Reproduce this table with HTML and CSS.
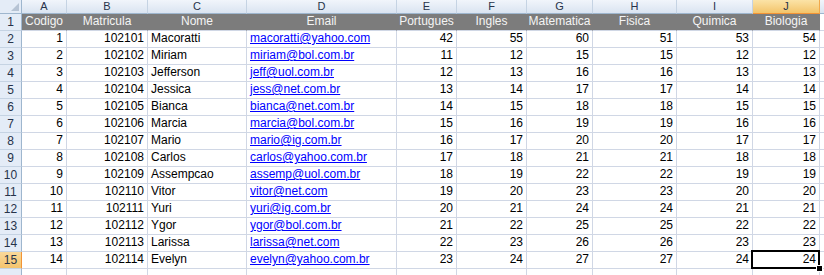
FILE: index.html
```html
<!DOCTYPE html>
<html>
<head>
<meta charset="utf-8">
<link rel="stylesheet" href="styles.css">
</head>
<body>
<div class="sheet">
<div class="ch corner"><span class="tri"></span></div>
<div class="ch">A</div><div class="ch">B</div><div class="ch">C</div><div class="ch">D</div><div class="ch">E</div><div class="ch">F</div><div class="ch">G</div><div class="ch">H</div><div class="ch">I</div><div class="ch sel">J</div><div class="ch"></div>

<div class="rh">1</div>
<div class="c t">Codigo</div><div class="c t">Matricula</div><div class="c t">Nome</div><div class="c t">Email</div><div class="c t">Portugues</div><div class="c t">Ingles</div><div class="c t">Matematica</div><div class="c t">Fisica</div><div class="c t">Quimica</div><div class="c t">Biologia</div><div class="c"></div>

<div class="rh">2</div><div class="c n">1</div><div class="c n">102101</div><div class="c">Macoratti</div><div class="c"><a href="#">macoratti@yahoo.com</a></div><div class="c n">42</div><div class="c n">55</div><div class="c n">60</div><div class="c n">51</div><div class="c n">53</div><div class="c n">54</div><div class="c"></div>
<div class="rh">3</div><div class="c n">2</div><div class="c n">102102</div><div class="c">Miriam</div><div class="c"><a href="#">miriam@bol.com.br</a></div><div class="c n">11</div><div class="c n">12</div><div class="c n">15</div><div class="c n">15</div><div class="c n">12</div><div class="c n">12</div><div class="c"></div>
<div class="rh">4</div><div class="c n">3</div><div class="c n">102103</div><div class="c">Jefferson</div><div class="c"><a href="#">jeff@uol.com.br</a></div><div class="c n">12</div><div class="c n">13</div><div class="c n">16</div><div class="c n">16</div><div class="c n">13</div><div class="c n">13</div><div class="c"></div>
<div class="rh">5</div><div class="c n">4</div><div class="c n">102104</div><div class="c">Jessica</div><div class="c"><a href="#">jess@net.com.br</a></div><div class="c n">13</div><div class="c n">14</div><div class="c n">17</div><div class="c n">17</div><div class="c n">14</div><div class="c n">14</div><div class="c"></div>
<div class="rh">6</div><div class="c n">5</div><div class="c n">102105</div><div class="c">Bianca</div><div class="c"><a href="#">bianca@net.com.br</a></div><div class="c n">14</div><div class="c n">15</div><div class="c n">18</div><div class="c n">18</div><div class="c n">15</div><div class="c n">15</div><div class="c"></div>
<div class="rh">7</div><div class="c n">6</div><div class="c n">102106</div><div class="c">Marcia</div><div class="c"><a href="#">marcia@bol.com.br</a></div><div class="c n">15</div><div class="c n">16</div><div class="c n">19</div><div class="c n">19</div><div class="c n">16</div><div class="c n">16</div><div class="c"></div>
<div class="rh">8</div><div class="c n">7</div><div class="c n">102107</div><div class="c">Mario</div><div class="c"><a href="#">mario@ig.com.br</a></div><div class="c n">16</div><div class="c n">17</div><div class="c n">20</div><div class="c n">20</div><div class="c n">17</div><div class="c n">17</div><div class="c"></div>
<div class="rh">9</div><div class="c n">8</div><div class="c n">102108</div><div class="c">Carlos</div><div class="c"><a href="#">carlos@yahoo.com.br</a></div><div class="c n">17</div><div class="c n">18</div><div class="c n">21</div><div class="c n">21</div><div class="c n">18</div><div class="c n">18</div><div class="c"></div>
<div class="rh">10</div><div class="c n">9</div><div class="c n">102109</div><div class="c">Assempcao</div><div class="c"><a href="#">assemp@uol.com.br</a></div><div class="c n">18</div><div class="c n">19</div><div class="c n">22</div><div class="c n">22</div><div class="c n">19</div><div class="c n">19</div><div class="c"></div>
<div class="rh">11</div><div class="c n">10</div><div class="c n">102110</div><div class="c">Vitor</div><div class="c"><a href="#">vitor@net.com</a></div><div class="c n">19</div><div class="c n">20</div><div class="c n">23</div><div class="c n">23</div><div class="c n">20</div><div class="c n">20</div><div class="c"></div>
<div class="rh">12</div><div class="c n">11</div><div class="c n">102111</div><div class="c">Yuri</div><div class="c"><a href="#">yuri@ig.com.br</a></div><div class="c n">20</div><div class="c n">21</div><div class="c n">24</div><div class="c n">24</div><div class="c n">21</div><div class="c n">21</div><div class="c"></div>
<div class="rh">13</div><div class="c n">12</div><div class="c n">102112</div><div class="c">Ygor</div><div class="c"><a href="#">ygor@bol.com.br</a></div><div class="c n">21</div><div class="c n">22</div><div class="c n">25</div><div class="c n">25</div><div class="c n">22</div><div class="c n">22</div><div class="c"></div>
<div class="rh">14</div><div class="c n">13</div><div class="c n">102113</div><div class="c">Larissa</div><div class="c"><a href="#">larissa@net.com</a></div><div class="c n">22</div><div class="c n">23</div><div class="c n">26</div><div class="c n">26</div><div class="c n">23</div><div class="c n">23</div><div class="c"></div>
<div class="rh sel">15</div><div class="c n">14</div><div class="c n">102114</div><div class="c">Evelyn</div><div class="c"><a href="#">evelyn@yahoo.com.br</a></div><div class="c n">23</div><div class="c n">24</div><div class="c n">27</div><div class="c n">27</div><div class="c n">24</div><div class="c n active">24<span class="handle"></span></div><div class="c"></div>
<div class="rh"></div><div class="c"></div><div class="c"></div><div class="c"></div><div class="c"></div><div class="c"></div><div class="c"></div><div class="c"></div><div class="c"></div><div class="c"></div><div class="c"></div><div class="c"></div>
</div>
</body>
</html>
```
FILE: styles.css
```css
html, body {
  margin: 0;
  padding: 0;
  background: #fff;
  overflow: hidden;
}
body {
  width: 824px;
  height: 275px;
}
.sheet {
  display: grid;
  grid-template-columns: 22px 45px 81px 99px 150px 60px 70px 66px 84px 76px 67px 40px;
  grid-template-rows: 14px repeat(16, 17px);
  width: 860px;
  font-family: "Liberation Sans", Arial, sans-serif;
  font-size: 12px;
  color: #000;
}
.sheet > div {
  box-sizing: border-box;
  white-space: nowrap;
  overflow: hidden;
}

/* column headers */
.ch {
  font-size: 11px;
  line-height: 13px;
  color: #27334a;
  text-align: center;
  background: linear-gradient(#f1f5fb, #dae4f1);
  border-right: 1px solid #c5d3e3;
  border-bottom: 1px solid #9eb6ce;
}
.ch.sel {
  background: linear-gradient(#fbe3a7, #f3c46a);
  border-right-color: #f2a94a;
  border-bottom-color: #f29436;
}
.ch.corner {
  position: relative;
  background: #e4ecf7;
  border-right: 1px solid #9eb6ce;
}
.tri {
  position: absolute;
  right: 2px;
  bottom: 2px;
  width: 0;
  height: 0;
  border-left: 8px solid transparent;
  border-bottom: 8px solid #b6c3d4;
}

/* row headers */
.rh {
  text-align: center;
  font-size: 12px;
  line-height: 17px;
  color: #27334a;
  background: #e4ecf7;
  border-right: 1px solid #9eb6ce;
  border-bottom: 1px solid #c5d3e3;
}
.rh.sel {
  background: linear-gradient(#f9d99a, #f4c46e);
  border-right-color: #f29436;
}

/* cells */
.c {
  display: flex;
  align-items: flex-end;
  padding: 0 3px 1px;
  line-height: 15px;
  border-right: 1px solid #d0d7e5;
  border-bottom: 1px solid #d0d7e5;
}
.c.n { justify-content: flex-end; }
.c.t {
  justify-content: center;
  background: #7c7c7c;
  color: #f4f4f4;
  border-right-color: #7c7c7c;
}
.c a {
  color: #0000ff;
  text-decoration: underline;
}

.sheet > .c.active {
  position: relative;
  overflow: visible;
}
.c.active::before {
  content: "";
  position: absolute;
  left: -2px;
  top: -2px;
  right: -1px;
  bottom: -1px;
  border: 2px solid #000;
}
.handle {
  position: absolute;
  right: -4px;
  bottom: -4px;
  width: 5px;
  height: 5px;
  background: #000;
  border: 1px solid #fff;
  z-index: 2;
}
```
